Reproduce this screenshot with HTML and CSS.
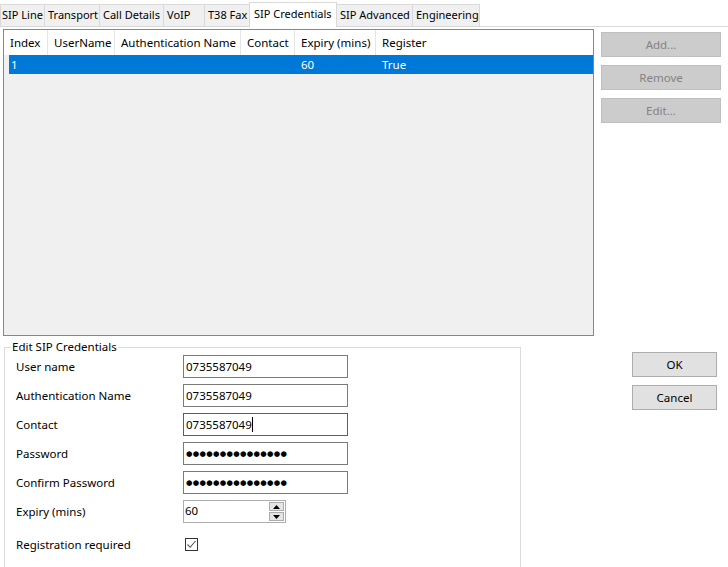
FILE: index.html
```html
<!DOCTYPE html>
<html lang="en">
<head>
  <meta charset="UTF-8" />
  <title>SIP Credentials</title>
  <link rel="stylesheet" href="styles.css">
</head>
<body>
  <div class="tabstrip">
    <div class="tab w-line">SIP Line</div>
    <div class="tab w-transport">Transport</div>
    <div class="tab w-call">Call Details</div>
    <div class="tab w-voip">VoIP</div>
    <div class="tab w-fax">T38 Fax</div>
    <div class="tab w-cred active">SIP Credentials</div>
    <div class="tab w-adv">SIP Advanced</div>
    <div class="tab w-eng">Engineering</div>
  </div>

  <div class="main">
    <div class="listview">
      <div class="lv-header">
        <div class="col c-index">Index</div>
        <div class="col c-user">UserName</div>
        <div class="col c-auth">Authentication Name</div>
        <div class="col c-contact">Contact</div>
        <div class="col c-expiry">Expiry (mins)</div>
        <div class="col c-reg">Register</div>
      </div>
      <div class="lv-row selected">
        <div class="cell c-index first">1</div>
        <div class="cell c-user"></div>
        <div class="cell c-auth"></div>
        <div class="cell c-contact"></div>
        <div class="cell c-expiry">60</div>
        <div class="cell c-reg">True</div>
      </div>
    </div>
    <div class="side-buttons">
      <button class="btn disabled">Add...</button>
      <button class="btn disabled">Remove</button>
      <button class="btn disabled">Edit...</button>
    </div>
  </div>

  <div class="bottom">
    <fieldset class="group">
      <legend>Edit SIP Credentials</legend>
      <div class="form">
        <label>User name</label>
        <div class="field">0735587049</div>
        <label>Authentication Name</label>
        <div class="field">0735587049</div>
        <label>Contact</label>
        <div class="field focused">0735587049<span class="caret"></span></div>
        <label>Password</label>
        <div class="field dots">●●●●●●●●●●●●●●●</div>
        <label>Confirm Password</label>
        <div class="field dots">●●●●●●●●●●●●●●●</div>
        <label>Expiry (mins)</label>
        <div class="spinner">
          <span class="spin-value">60</span>
          <span class="spin-buttons">
            <span class="spin-btn"><svg width="7" height="4" viewBox="0 0 7 4"><path d="M0 4 L3.5 0 L7 4 Z" fill="#000"/></svg></span>
            <span class="spin-btn"><svg width="7" height="4" viewBox="0 0 7 4"><path d="M0 0 L3.5 4 L7 0 Z" fill="#000"/></svg></span>
          </span>
        </div>
        <label class="last">Registration required</label>
        <div class="check-wrap last">
          <span class="checkbox">
            <svg width="11" height="11" viewBox="0 0 11 11"><path d="M1.5 5.5 L4.2 8.3 L9.5 2" fill="none" stroke="#555" stroke-width="1.1"/></svg>
          </span>
        </div>
      </div>
    </fieldset>
    <div class="dialog-buttons">
      <button class="btn">OK</button>
      <button class="btn">Cancel</button>
    </div>
  </div>
</body>
</html>
```

FILE: styles.css
```css
body {
  margin: 0;
  width: 728px;
  height: 567px;
  overflow: hidden;
  background: #fff;
  font-family: "Noto Sans", "Open Sans", sans-serif;
  font-size: 11.5px;
  color: #000;
}

/* tabs */
.tabstrip {
  display: flex;
  align-items: flex-end;
  height: 27px;
  box-sizing: border-box;
  border-bottom: 1px solid #d9d9d9;
}
.tab {
  box-sizing: border-box;
  height: 22px;
  margin-left: -1px;
  padding-left: 3px;
  font-size: 11px;
  line-height: 20px;
  background: #f0f0f0;
  border: 1px solid #d9d9d9;
  border-bottom: none;
  white-space: nowrap;
  overflow: hidden;
}
.tab:first-child {
  margin-left: 0;
  padding-left: 1px;
}
.tab.active {
  height: 25px;
  margin-bottom: -1px;
  padding-left: 4px;
  line-height: 22px;
  background: #fff;
  position: relative;
}
.w-line { width: 45px; }
.w-transport { width: 56px; }
.w-call { width: 65px; }
.w-voip { width: 42px; }
.w-fax { width: 46px; }
.w-cred { width: 88px; }
.w-adv { width: 77px; }
.w-eng { width: 68px; }

/* list + side buttons */
.main {
  display: flex;
  margin-top: 2px;
}
.listview {
  box-sizing: border-box;
  width: 591px;
  height: 307px;
  margin-left: 3px;
  border: 1px solid #828790;
  background: #f0f0f0;
}
.lv-header {
  display: flex;
  height: 25px;
  background: #fff;
}
.col {
  box-sizing: border-box;
  padding-left: 6px;
  line-height: 25px;
  border-right: 1px solid #e5e5e5;
  white-space: nowrap;
}
.col.c-reg { border-right: none; }
.c-index { width: 44px; }
.c-user { width: 67px; }
.c-auth { width: 126px; }
.c-contact { width: 54px; }
.c-expiry { width: 81px; }
.c-reg { flex: 1; }
.lv-row {
  display: flex;
  height: 19px;
  line-height: 19px;
}
.lv-row.selected {
  background: #0078d7;
  color: #fff;
  margin-left: 5px;
}
.cell {
  box-sizing: border-box;
  padding-left: 6px;
  white-space: nowrap;
}
.cell.first {
  width: 39px;
  padding-left: 2px;
}

.side-buttons {
  display: flex;
  flex-direction: column;
  gap: 8px;
  margin-left: 7px;
  margin-top: 3px;
}
.btn {
  box-sizing: border-box;
  width: 120px;
  height: 25px;
  padding: 0;
  font-family: inherit;
  font-size: 11.5px;
  background: #e1e1e1;
  border: 1px solid #adadad;
  color: #000;
}
.btn.disabled {
  background: #cccccc;
  border-color: #bfbfbf;
  color: #838383;
}

/* bottom part */
.bottom {
  display: flex;
  margin-top: 4px;
}
.group {
  box-sizing: border-box;
  width: 517px;
  height: 240px;
  margin: 0 0 0 4px;
  padding: 0 0 0 11px;
  border: 1px solid #dcdcdc;
}
.group legend {
  padding: 0 1px;
  margin-left: -5px;
  line-height: 14px;
}
.form {
  display: grid;
  grid-template-columns: 167px 165px;
  grid-auto-rows: 29px;
  align-items: center;
  margin-top: -2px;
}
.form .last {
  margin-top: 7px;
}
.field {
  box-sizing: border-box;
  height: 23px;
  padding-left: 2px;
  line-height: 21px;
  border: 1px solid #7a7a7a;
  white-space: nowrap;
}
.field.focused {
  border-color: #0078d7;
}
.caret {
  display: inline-block;
  width: 1px;
  height: 15px;
  background: #000;
  vertical-align: -3px;
}
.field.dots {
  font-family: "DejaVu Sans", sans-serif;
  font-size: 7.4px;
  letter-spacing: 0.3px;
  line-height: 21px;
}
.spinner {
  box-sizing: border-box;
  display: flex;
  justify-content: space-between;
  width: 103px;
  height: 23px;
  padding: 1px;
  border: 1px solid #adadad;
}
.spin-value {
  line-height: 17px;
}
.spin-buttons {
  display: flex;
  flex-direction: column;
  gap: 1px;
}
.spin-btn {
  box-sizing: border-box;
  display: flex;
  align-items: center;
  justify-content: center;
  width: 15px;
  height: 9px;
  background: #e5e5e5;
  border: 1px solid #acacac;
}
.check-wrap {
  padding-left: 2px;
}
.checkbox {
  box-sizing: border-box;
  display: flex;
  align-items: center;
  justify-content: center;
  width: 13px;
  height: 13px;
  border: 1px solid #333;
  background: #fff;
}

.dialog-buttons {
  display: flex;
  flex-direction: column;
  gap: 8px;
  margin-left: 111px;
  margin-top: 12px;
}
.dialog-buttons .btn {
  width: 85px;
}
```
